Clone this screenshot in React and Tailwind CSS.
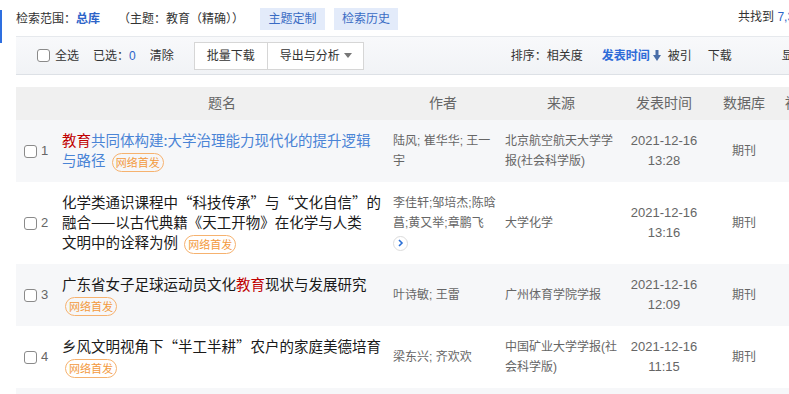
import React from 'react'

const rows = [
    {
        n: 1,
        h: 'h-[62px]',
        bg: 'bg-[#f6f7f9]',
        title: (
            <>
                <span className="text-[#c00000]">教育</span>
                <span className="text-[#4a84d6]">共同体构建:大学治理能力现代化的提升逻辑与路径</span>
            </>
        ),
        authors: ['陆风; 崔华华; 王一', '宇'],
        source: '北京航空航天大学学报(社会科学版)',
        date: ['2021-12-16', '13:28'],
    },
    {
        n: 2,
        h: 'h-[82px]',
        bg: 'bg-white',
        title: (
            <>
                化学类通识课程中“科技传承”与“文化自信”的<br />
                融合——以古代典籍《天工开物》在化学与人类<br />
                文明中的诠释为例
            </>
        ),
        authors: ['李佳轩;邹培杰;陈晗', '菖;黄又举;章鹏飞'],
        more: true,
        source: '大学化学',
        date: ['2021-12-16', '13:16'],
    },
    {
        n: 3,
        h: 'h-[62px]',
        bg: 'bg-[#f6f7f9]',
        title: (
            <>
                广东省女子足球运动员文化<span className="text-[#c00000]">教育</span>现状与发展研究
            </>
        ),
        authors: ['叶诗敏; 王雷'],
        source: '广州体育学院学报',
        date: ['2021-12-16', '12:09'],
    },
    {
        n: 4,
        h: 'h-[62px]',
        bg: 'bg-white',
        title: <>乡风文明视角下“半工半耕”农户的家庭美德培育</>,
        authors: ['梁东兴; 齐欢欢'],
        source: '中国矿业大学学报(社会科学版)',
        date: ['2021-12-16', '11:15'],
    },
]

const cols = 'grid grid-cols-[44px_324px_118px_118px_88px_72px_80px]'

function Box() {
    return <span className="inline-block w-[13px] h-[13px] border border-[#8a8a8a] rounded-[3px] bg-white shrink-0" />
}

function Badge() {
    return (
        <span className="inline-block ml-[3px] px-[3px] h-[19px] leading-[17px] align-[-1px] text-[11px] text-[#f39a3d] border border-[#f6b26f] rounded-full font-['Noto_Sans_CJK_SC',sans-serif]">
            网络首发
        </span>
    )
}

export default function App() {
    return (
        <div className="relative w-[789px] h-[394px] overflow-hidden bg-white text-[12px] text-[#333] font-['Liberation_Sans','Noto_Sans_CJK_SC',sans-serif]">
            <div className="absolute left-0 top-[10px] w-[2px] h-[33px] bg-[#2e6fe0]" />

            {/* search scope */}
            <div className="flex items-center h-[22px] mt-[8px] pl-[16px] whitespace-nowrap">
                <span className="shrink-0">检索范围：</span>
                <span className="shrink-0 font-bold text-[#2d64c8]">总库</span>
                <span className="shrink-0 ml-[18px]">（主题：教育（精确））</span>
                <span className="shrink-0 ml-[16px] w-[65px] h-[22px] leading-[22px] text-center bg-[#e3ebfa] text-[#3a6bc4]">主题定制</span>
                <span className="shrink-0 ml-[9px] w-[64px] h-[22px] leading-[22px] text-center bg-[#e3ebfa] text-[#3a6bc4]">检索历史</span>
                <span className="shrink-0 ml-[340px] mb-[5px]">
                    共找到 <span className="text-[#2d64c8]">7,361</span> 条结果
                </span>
            </div>

            {/* toolbar */}
            <div className="ml-[16px] mt-[6px] h-[39px] flex items-center pl-[21px] whitespace-nowrap border-t border-b border-t-[#e6e9ed] border-b-[#dde1e6] bg-gradient-to-b from-[#f8f9fb] to-[#f1f3f6]">
                <Box />
                <span className="shrink-0 ml-[5px]">全选</span>
                <span className="shrink-0 ml-[14px]">已选：<span className="text-[#2d64c8]">0</span></span>
                <span className="shrink-0 ml-[14px]">清除</span>
                <span className="shrink-0 ml-[20px] w-[74px] h-[28px] flex items-center justify-center bg-white border border-[#d6d6d6]">批量下载</span>
                <span className="shrink-0 -ml-px w-[97px] h-[28px] flex items-center pl-[12px] bg-white border border-[#d6d6d6]">
                    导出与分析
                    <svg width="8" height="5" viewBox="0 0 8 5" className="ml-[4px]">
                        <polygon points="0,0 8,0 4,5" fill="#777" />
                    </svg>
                </span>
                <span className="shrink-0 ml-[147px]">排序：相关度</span>
                <span className="shrink-0 ml-[19px] flex items-center text-[#2e6bd8] font-bold">
                    发表时间
                    <svg width="8" height="11" viewBox="0 0 8 11" className="ml-[3px]">
                        <rect x="2.5" y="0" width="3" height="6" fill="#4a6ea8" />
                        <polygon points="0,5 8,5 4,11" fill="#4a6ea8" />
                    </svg>
                </span>
                <span className="shrink-0 ml-[7px]">被引</span>
                <span className="shrink-0 ml-[16px]">下载</span>
                <span className="shrink-0 ml-[50px]">显示</span>
            </div>

            {/* table */}
            <div className="ml-[16px] mt-[12px] w-[844px]">
                <div className={`${cols} h-[33px] items-center bg-[#f0f0f0] text-[14px] text-[#666] whitespace-nowrap`}>
                    <span />
                    <span className="text-center">题名</span>
                    <span className="text-center">作者</span>
                    <span className="text-center">来源</span>
                    <span className="text-center">发表时间</span>
                    <span className="text-center">数据库</span>
                    <span className="pl-[5px]">被引</span>
                </div>

                {rows.map(r => (
                    <div key={r.n} className={`${cols} ${r.h} ${r.bg} items-center`}>
                        <div className="flex items-center pl-[8px]">
                            <Box />
                            <span className="ml-[4px] text-[13px] text-[#666]">{r.n}</span>
                        </div>
                        <div className="pl-[2px] pr-[2px] text-[14.5px] leading-[20px] text-[#1a1a1a] font-['Noto_Sans_CJK_SC','Liberation_Sans',sans-serif]">
                            {r.title} <Badge />
                        </div>
                        <div className="pl-[9px] text-[12px] leading-[20px] text-[#666] whitespace-nowrap">
                            {r.authors.map((a, i) => (
                                <div key={i}>{a}</div>
                            ))}
                            {r.more && (
                                <div className="h-[20px] flex items-center">
                                    <span className="w-[15px] h-[15px] rounded-full border border-[#dcdcdc] bg-white flex items-center justify-center">
                                        <svg width="7" height="8" viewBox="0 0 7 8">
                                            <path d="M2 1 L5 4 L2 7" stroke="#2a6fd6" strokeWidth="1.6" fill="none" />
                                        </svg>
                                    </span>
                                </div>
                            )}
                        </div>
                        <div className="pl-[3px] text-[12px] leading-[20px] text-[#666]">{r.source}</div>
                        <div className="text-center text-[13px] leading-[20px] text-[#666]">
                            <div>{r.date[0]}</div>
                            <div>{r.date[1]}</div>
                        </div>
                        <div className="text-center text-[12px] text-[#666]">期刊</div>
                        <div />
                    </div>
                ))}
                <div className="h-[10px] bg-[#f6f7f9]" />
            </div>
        </div>
    )
}
